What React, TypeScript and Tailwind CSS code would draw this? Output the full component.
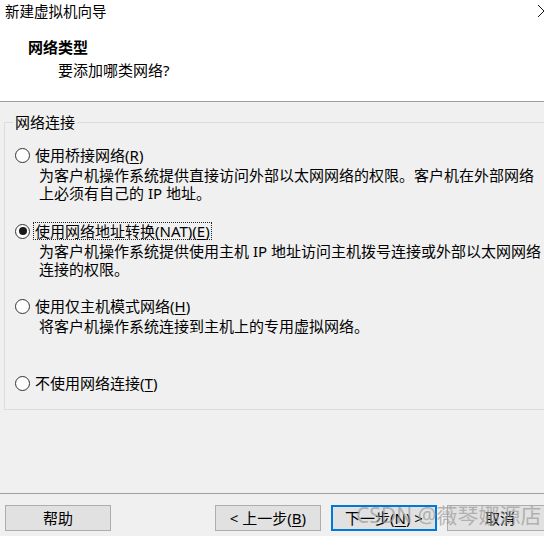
import React from "react";

const font = {
  fontFamily: '"Noto Sans", "Noto Sans CJK SC", sans-serif',
};

function Radio({ checked }: { checked?: boolean }) {
  return (
    <span className="w-[15px] h-[15px] shrink-0 rounded-full border border-[#333333] bg-white flex items-center justify-center">
      {checked && <span className="w-[8px] h-[8px] rounded-full bg-[#1a1a1a]" />}
    </span>
  );
}

function Option({
  label,
  keyChar,
  prefix,
  checked,
  focused,
  lines,
  className,
}: {
  label: string;
  prefix?: string;
  keyChar: string;
  checked?: boolean;
  focused?: boolean;
  lines?: string[];
  className?: string;
}) {
  return (
    <div className={className}>
      <div className="flex items-center h-[18px]">
        <Radio checked={checked} />
        <span
          className={`ml-[3px] px-[1px] leading-[16px] whitespace-nowrap border border-dotted ${
            focused ? "border-[#222222]" : "border-transparent"
          }`}
        >
          {label}
          {prefix}(<span className="underline underline-offset-2">{keyChar}</span>)
        </span>
      </div>
      {lines && (
        <div className="ml-[24px] mt-[2px] leading-[18px] whitespace-nowrap">
          {lines.map((l) => (
            <div key={l}>{l}</div>
          ))}
        </div>
      )}
    </div>
  );
}

function Button({
  children,
  primary,
  className,
}: {
  children: React.ReactNode;
  primary?: boolean;
  className?: string;
}) {
  return (
    <button
      className={`w-[106px] h-[26px] shrink-0 bg-[#e1e1e1] flex items-center justify-center text-black leading-none ${
        primary ? "border-2 border-[#0078d7]" : "border border-[#adadad]"
      } ${className ?? ""}`}
    >
      {children}
    </button>
  );
}

export default function App() {
  return (
    <div
      className="w-[544px] h-[536px] overflow-hidden bg-[#f0f0f0] flex flex-col text-[15px] text-black relative"
      style={font}
    >
      {/* header */}
      <div className="bg-white h-[102px] shrink-0 border-b border-[#a0a0a0]">
        <div className="h-[22px] flex items-center justify-between pl-[5px]">
          <span className="text-[14.5px] leading-[22px]">新建虚拟机向导</span>
          <svg width="12" height="12" viewBox="0 0 12 12" className="-mr-[6px]">
            <path d="M0 0 L12 12 M12 0 L0 12" stroke="#111" strokeWidth="1" fill="none" />
          </svg>
        </div>
        <div className="pl-[28px] pt-[16px] font-bold leading-[18px]">网络类型</div>
        <div className="pl-[58px] mt-[5px] leading-[18px]">要添加哪类网络?</div>
      </div>

      {/* group */}
      <fieldset className="mt-[11px] ml-[4px] w-[560px] h-[297px] shrink-0 border border-[#dcdcdc] px-[10px]">
        <legend className="ml-[-2px] px-[2px] leading-[18px]">网络连接</legend>
        <Option
          className="pt-[15px]"
          label="使用桥接网络"
          keyChar="R"
          lines={[
            "为客户机操作系统提供直接访问外部以太网网络的权限。客户机在外部网络",
            "上必须有自己的 IP 地址。",
          ]}
        />
        <Option
          className="mt-[20px]"
          label="使用网络地址转换"
          prefix="(NAT)"
          keyChar="E"
          checked
          focused
          lines={[
            "为客户机操作系统提供使用主机 IP 地址访问主机拨号连接或外部以太网网络",
            "连接的权限。",
          ]}
        />
        <Option
          className="mt-[19px]"
          label="使用仅主机模式网络"
          keyChar="H"
          lines={["将客户机操作系统连接到主机上的专用虚拟网络。"]}
        />
        <Option className="mt-[39px]" label="不使用网络连接" keyChar="T" />
      </fieldset>

      {/* footer */}
      <div className="mt-auto h-[43px] shrink-0 border-t border-[#a0a0a0] pt-[11px] pl-[5px] flex">
        <Button>帮助</Button>
        <Button className="ml-[104px]">
          &lt; 上一步(<span className="underline underline-offset-2">B</span>)
        </Button>
        <Button className="ml-[10px]" primary>
          下一步(<span className="underline underline-offset-2">N</span>) &gt;
        </Button>
        <Button className="ml-[10px]">取消</Button>
      </div>

      {/* watermark */}
      <div className="absolute left-[356px] top-[502px] text-[21px] leading-[26px] whitespace-nowrap text-[#9a9a9a]/70 pointer-events-none">
        CSDN @薇琴娜源店
      </div>
    </div>
  );
}
